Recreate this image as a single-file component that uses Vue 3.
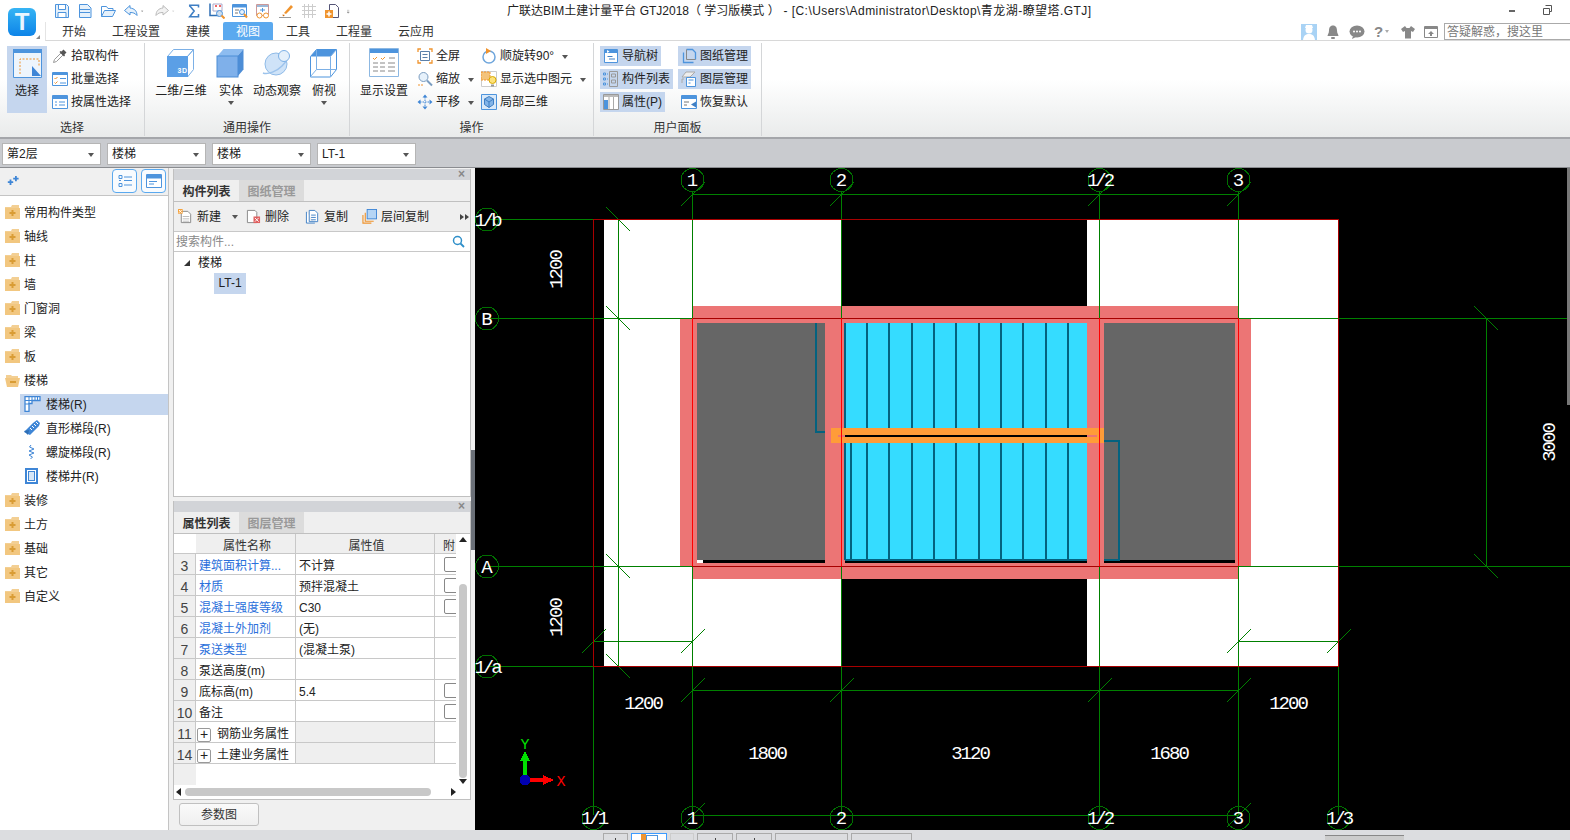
<template>
  <div class="app">

    <!-- Title bar + ribbon tabs -->
    <header class="topbar">
      <div class="logo-cell">
        <div class="logo">T</div>
        <i class="logo-corner"></i>
      </div>
      <div class="top-main">
        <div class="title-row">
          <div class="quick">
            <svg v-for="q in quickIcons" :key="q.name" class="ic" :class="q.cls" :width="q.w || 16" height="16" viewBox="0 0 16 16" v-html="icons[q.name]"></svg>
          </div>
          <div class="title">广联达BIM土建计量平台 GTJ2018（ 学习版模式 ）<span class="title-tail"> - [C:\Users\Administrator\Desktop\青龙湖-瞭望塔.GTJ]</span></div>
          <div class="win-ctl">
            <svg width="12" height="12" viewBox="0 0 12 12"><rect x="3" y="6" width="6" height="2" fill="#666" /></svg>
            <svg width="12" height="12" viewBox="0 0 12 12"><path d="M3.5 1.5h6v6h-2M1.5 4.5h6v6h-6z" fill="none" stroke="#555" /></svg>
          </div>
        </div>
        <div class="tab-row">
          <span v-for="t in tabs" :key="t" class="tab" :class="{ 'tab--on': t === '视图' }">{{ t }}</span>
          <div class="help">
            <svg width="16" height="16" viewBox="0 0 16 16" v-html="icons.avatar"></svg>
            <svg width="14" height="16" viewBox="0 0 14 16" v-html="icons.bell"></svg>
            <svg width="16" height="16" viewBox="0 0 16 16" v-html="icons.chat"></svg>
            <span class="help-q">?<i class="caret caret--mini"></i></span>
            <svg width="14" height="16" viewBox="0 0 14 16" v-html="icons.shirt"></svg>
            <svg width="14" height="16" viewBox="0 0 14 16" v-html="icons.upload"></svg>
            <div class="help-search">答疑解惑，搜这里</div>
          </div>
        </div>
      </div>
    </header>

    <!-- Ribbon -->
    <section class="ribbon">
      <div class="rgroup" style="width: 145px">
        <div class="rbody rbody--select">
          <div class="lbtn lbtn--on">
            <svg width="30" height="30" viewBox="0 0 30 30" v-html="icons.select"></svg>
            <span>选择</span>
          </div>
          <div class="scol">
            <div v-for="b in selectBtns" :key="b.text" class="sbtn">
              <svg width="16" height="16" viewBox="0 0 16 16" v-html="icons[b.icon]"></svg>{{ b.text }}
            </div>
          </div>
        </div>
        <div class="rlabel">选择</div>
      </div>

      <div class="rgroup" style="width: 205px">
        <div class="rbody rbody--common">
          <div v-for="b in commonBtns" :key="b.text" class="lbtn" :style="{ width: b.w + 'px' }">
            <svg width="30" height="30" viewBox="0 0 30 30" v-html="icons[b.icon]"></svg>
            <span>{{ b.text }}</span>
            <i v-if="b.more" class="caret"></i>
          </div>
        </div>
        <div class="rlabel">通用操作</div>
      </div>

      <div class="rgroup" style="width: 244px">
        <div class="rbody rbody--ops">
          <div class="lbtn" style="width: 52px">
            <svg width="30" height="30" viewBox="0 0 30 30" v-html="icons.display"></svg>
            <span>显示设置</span>
          </div>
          <div class="scol scol--a">
            <div v-for="b in opsA" :key="b.text" class="sbtn">
              <svg width="16" height="16" viewBox="0 0 16 16" v-html="icons[b.icon]"></svg>{{ b.text }}<i v-if="b.more" class="caret caret--side"></i>
            </div>
          </div>
          <div class="scol">
            <div v-for="b in opsB" :key="b.text" class="sbtn">
              <svg width="16" height="16" viewBox="0 0 16 16" v-html="icons[b.icon]"></svg>{{ b.text }}<i v-if="b.more" class="caret caret--side"></i>
            </div>
          </div>
        </div>
        <div class="rlabel">操作</div>
      </div>

      <div class="rgroup" style="width: 168px">
        <div class="rbody rbody--panel">
          <div class="scol scol--p">
            <div v-for="b in panelA" :key="b.text" class="sbtn sbtn--on">
              <svg width="16" height="16" viewBox="0 0 16 16" v-html="icons[b.icon]"></svg>{{ b.text }}
            </div>
          </div>
          <div class="scol">
            <div v-for="b in panelB" :key="b.text" class="sbtn" :class="{ 'sbtn--on': b.on }">
              <svg width="16" height="16" viewBox="0 0 16 16" v-html="icons[b.icon]"></svg>{{ b.text }}
            </div>
          </div>
        </div>
        <div class="rlabel">用户面板</div>
      </div>
    </section>

    <!-- Floor / component pickers -->
    <div class="pickers">
      <div v-for="(p, i) in pickers" :key="i" class="picker">{{ p }}<i class="caret"></i></div>
    </div>

    <div class="workspace">
      <!-- Navigation tree -->
      <aside class="nav">
        <div class="nav-head">
          <svg width="14" height="12" viewBox="0 0 14 12"><path d="M4 5v2H2v2h2v2h2V9h2V7H6V5zM10 1v2H8v2h2v2h2V5h2V3h-2V1z" fill="#3f86d6" transform="scale(.9)" /></svg>
          <div class="nav-toggle">
            <svg width="14" height="14" viewBox="0 0 14 14"><path d="M1 1.5h3v3H1zM1 9.5h3v3H1zM6 3h8M6 6.5h8M6 11h8M1 6.5h2" fill="none" stroke="#4d94dd" /></svg>
          </div>
          <div class="nav-toggle">
            <svg width="16" height="14" viewBox="0 0 16 14"><path d="M.5.5h15v13H.5z" fill="#fff" stroke="#4d94dd" /><path d="M1 1h14v3.500H1z" fill="#4d94dd" /><path d="M3 7.500h8M3 10h5" stroke="#4d94dd" /></svg>
          </div>
        </div>
        <div class="nav-tree">
          <div v-for="n in navItems" :key="n.text" class="nav-row" :class="{ 'nav-row--child': n.child }">
            <div class="nav-item" :class="{ 'nav-item--on': n.on }">
              <svg v-if="n.child" width="17" height="16" viewBox="0 0 17 16" v-html="icons[n.icon]"></svg>
              <svg v-else width="15" height="14" viewBox="0 0 15 14" v-html="n.open ? icons.folderOpen : icons.folder"></svg>
              <span>{{ n.text }}</span>
            </div>
          </div>
        </div>
      </aside>

      <!-- Component list + property panels -->
      <div class="side">
        <div class="panel panel--list">
          <div class="panel-strip"><span>×</span></div>
          <div class="panel-tabs">
            <span class="ptab ptab--on">构件列表</span>
            <span class="ptab">图纸管理</span>
          </div>
          <div class="list-tools">
            <div v-for="b in listTools" :key="b.text" class="ltool" :style="{ width: b.w + 'px' }">
              <svg width="15" height="15" viewBox="0 0 16 16" v-html="icons[b.icon]"></svg>
              <span>{{ b.text }}</span>
              <i v-if="b.more" class="caret caret--tool"></i>
            </div>
            <svg class="ltool-more" width="9" height="8" viewBox="0 0 9 8"><path d="M0 1l4 3-4 3zM5 1l4 3-4 3z" fill="#444" /></svg>
          </div>
          <div class="list-search">
            <span>搜索构件...</span>
            <svg width="13" height="13" viewBox="0 0 13 13"><circle cx="5.500" cy="5.500" r="4" fill="none" stroke="#2f8fc9" stroke-width="1.500" /><path d="M8.500 8.500l3.500 3.500" stroke="#2f8fc9" stroke-width="1.800" /></svg>
          </div>
          <div class="list-tree">
            <div class="lt-root"><i class="lt-arrow"></i>楼梯</div>
            <div class="lt-leaf">LT-1</div>
          </div>
        </div>

        <div class="panel panel--props">
          <div class="panel-strip"><span>×</span></div>
          <div class="panel-tabs">
            <span class="ptab ptab--on">属性列表</span>
            <span class="ptab">图层管理</span>
          </div>
          <div class="props-wrap">
            <div class="props">
              <div class="prow prow--head">
                <div class="pc pc-no"></div>
                <div class="pc pc-name">属性名称</div>
                <div class="pc pc-val">属性值</div>
                <div class="pc pc-att">附</div>
              </div>
              <div v-for="r in propRows" :key="r.no" class="prow">
                <div class="pc pc-no">{{ r.no }}</div>
                <div class="pc pc-name" :class="{ 'pc-name--link': r.link }">
                  <span v-if="r.group" class="plus">+</span>{{ r.name }}
                </div>
                <div class="pc pc-val" :class="{ 'pc-val--group': r.group }">{{ r.val }}</div>
                <div class="pc pc-att"><i v-if="r.check" class="check"></i></div>
              </div>
              <div class="prow-fill"></div>
            </div>
            <div class="vscroll">
              <i class="tri tri--up"></i>
              <div class="vthumb"></div>
              <i class="tri tri--down"></i>
            </div>
          </div>
          <div class="hscroll">
            <i class="tri tri--left"></i>
            <div class="hthumb"></div>
            <i class="tri tri--right"></i>
          </div>
        </div>

        <div class="props-foot"><button class="btn-param">参数图</button></div>
      </div>

      <div class="splitter"><i></i></div>

      <!-- Drawing canvas: page coordinates, viewBox starts at the canvas corner -->
      <div class="canvas">
        <svg width="1095" height="662" viewBox="475 168 1095 662" shape-rendering="crispEdges">
          <rect x="604" y="220" width="238" height="446" fill="#fff" />
          <rect x="1087" y="220" width="251" height="446" fill="#fff" />
          <rect x="692" y="306" width="546" height="273" fill="#ec7575" />
          <rect x="680" y="318" width="571" height="248" fill="#ec7575" />
          <rect x="697" y="323" width="128" height="237" fill="#666" />
          <rect x="1104" y="323" width="131" height="237" fill="#666" />
          <rect x="845" y="323" width="242" height="237" fill="#35dcff" />
          <rect x="697" y="560" width="6" height="3" fill="#fff" />
          <rect x="703" y="560" width="122" height="3" fill="#000" />
          <rect x="1104" y="560" width="131" height="3" fill="#000" />
          <rect x="845" y="561" width="242" height="2" fill="#000" />

          <!-- stair treads -->
          <rect v-for="x in treads" :key="'t' + x" :x="x" y="323" width="2" height="237" fill="#04627f" />
          <rect x="850" y="443" width="2" height="117" fill="#04627f" />
          <rect x="845" y="559" width="242" height="2" fill="#04627f" />
          <path d="M815.500 323V432H825M1104 440.500H1118.500V560H1104" fill="none" stroke="#04627f" stroke-width="2" />

          <!-- landing -->
          <rect x="831" y="428" width="273" height="15" fill="#ff9c38" />
          <rect x="838" y="435" width="259" height="2" fill="#ec7575" />
          <rect x="845" y="435" width="242" height="2" fill="#000" />

          <!-- axes -->
          <line v-for="(l, i) in greenLines" :key="'g' + i" :x1="l[0]" :y1="l[1]" :x2="l[2]" :y2="l[3]" stroke="#008000" />
          <line v-for="(l, i) in ticks" :key="'k' + i" :x1="l[0]" :y1="l[1]" :x2="l[2]" :y2="l[3]" stroke="#008000" />
          <line v-for="(l, i) in darkRedLines" :key="'d' + i" :x1="l[0]" :y1="l[1]" :x2="l[2]" :y2="l[3]" stroke="#a80000" />
          <line v-for="x in redAxes" :key="'r' + x" :x1="x" y1="318" :x2="x" y2="566" stroke="#ff0000" />

          <g v-for="b in bubbles" :key="b.t + b.x + b.y">
            <circle :cx="b.x" :cy="b.y" r="11.500" fill="none" stroke="#006f00" />
            <text class="cad-text" :class="{ 'cad-text--frac': b.t.length > 1 }" :x="b.x" :y="b.y + 6" text-anchor="middle">{{ b.t }}</text>
          </g>

          <text v-for="d in dims" :key="d.t + d.x + d.y" class="cad-text cad-text--dim" :transform="d.r ? `rotate(-90 ${d.x} ${d.y})` : null" :x="d.x" :y="d.y + 6" text-anchor="middle">{{ d.t }}</text>

          <!-- UCS marker -->
          <rect x="523" y="758" width="4" height="22" fill="#00e000" />
          <path d="M525 751l5 10h-10z" fill="#00e000" />
          <rect x="525" y="778" width="22" height="4" fill="#ff0000" />
          <path d="M554 780l-11 5v-10z" fill="#ff0000" />
          <circle cx="525" cy="780" r="5.500" fill="#0000b0" />
          <text class="cad-axis" x="525" y="749" fill="#00e000" text-anchor="middle">Y</text>
          <text class="cad-axis" x="561" y="786" fill="#ff0000" text-anchor="middle">X</text>
        </svg>
        <div class="canvas-bar"></div>
      </div>
    </div>

    <!-- Bottom strip -->
    <footer class="bottom">
      <div v-for="(b, i) in bottomTabs" :key="i" class="btab" :class="b.cls" :style="{ width: b.w + 'px' }">
        <i v-if="b.mark" class="btab-mark"></i>
        <svg v-if="b.cls === 'btab--on'" width="22" height="9" viewBox="0 0 22 9"><rect x="3" y="0" width="5" height="9" fill="#f0942e" /><rect x="8.500" y="1.500" width="11" height="9" fill="#fff" stroke="#4d94dd" /></svg>
      </div>
      <div class="bstrip"></div>
    </footer>
  </div>
</template>

<script setup>
const B = '#4d94dd'
const O = '#f0942e'

const icons = {
  save: `<path d="M1.500 1.500h11l2 2v11h-13z" fill="#e6f1fb" stroke="${B}"/><path d="M4.500 2v4.500h7V2M4 14v-4.500h8V14" fill="#fff" stroke="${B}"/>`,
  newDoc: `<path d="M2.500 1.500h8l3.500 3.500v9.500H2.500z" fill="#e6f1fb" stroke="${B}"/><path d="M3 6.500h10M3 9.500h10" stroke="${B}"/>`,
  open: `<path d="M1.500 13.500v-10h5l1.500 2h5v2" fill="none" stroke="${B}"/><path d="M1.500 13.500l3-6h11l-3 6z" fill="#e6f1fb" stroke="${B}"/>`,
  undo: `<path d="M7 2.500L1.500 7.500 7 12V9.500c3 0 5 .5 7 3 0-4.500-2.500-7-7-7.500z" fill="#e6f1fb" stroke="${B}"/>`,
  redo: `<path d="M9 2.500l5.500 5L9 12V9.500c-3 0-5 .5-7 3 0-4.500 2.500-7 7-7.500z" fill="#f2f2f2" stroke="#bbb"/>`,
  drop: `<path d="M0 7h6L3 10z" fill="#555"/>`,
  dropGray: `<path d="M0 7h6L3 10z" fill="#bbb"/>`,
  sigma: `<path d="M2 3V1.500h10V4M12 11.500v3H2l5-6.500-5-6" fill="none" stroke="#3f7fc4" stroke-width="1.800"/>`,
  report: `<path d="M1 .5v12h9" fill="none" stroke="#2f6fb5" stroke-width="1.500"/><path d="M4 1h9v7H4z" fill="#fff" stroke="#aac"/><path d="M6 2h2v2H6zM10 2h2v2h-2z" fill="#e66"/><circle cx="10.500" cy="10.500" r="3" fill="#cde" stroke="${B}"/><path d="M12.500 12.500l3 3" stroke="${O}" stroke-width="2"/>`,
  query: `<path d="M.5 1.500h14v12H.5z" fill="#fff" stroke="${B}"/><path d="M1 2h13v2.500H1z" fill="${B}"/><path d="M3 7h4M3 10h3" stroke="#777"/><circle cx="10" cy="9" r="2.500" fill="#e6f1fb" stroke="${B}"/><path d="M12 11l3 3.500" stroke="${O}" stroke-width="2"/>`,
  clock: `<path d="M1.500 1.500h12v11h-12z" fill="#fff" stroke="#c99"/><path d="M2 2h11v2H2z" fill="#9cb9d8"/><path d="M5 7h5M7.500 5v4" stroke="${B}"/><circle cx="4.500" cy="12.500" r="2.500" fill="#fff" stroke="${O}"/><circle cx="11" cy="12.500" r="2.500" fill="#fff" stroke="${O}"/>`,
  brush: `<path d="M6 10l7-8 2 2-7 7z" fill="${O}"/><path d="M4.500 11.500L7 12 5 13.500z" fill="#c60"/><path d="M1 14.500h12" stroke="#999"/>`,
  gridGray: `<path d="M1 3.500h14M1 7.500h14M1 11.500h14M3.500 1v14M7.500 1v14M11.500 1v14" stroke="#ccc"/>`,
  addDoc: `<path d="M5.500 1.500h6l3 3v10h-9z" fill="#fff" stroke="#557"/><rect x="1" y="7" width="8" height="8" fill="${O}"/><path d="M5 8.500v5M2.500 11h5" stroke="#fff" stroke-width="1.500"/>`,
  menu: `<path d="M0 6h6M0 8.500h6M0 11h6L3 14z" stroke="#777" fill="#777" stroke-width=".8"/>`,
  avatar: `<rect width="16" height="16" fill="#a9d3f5"/><circle cx="8" cy="6" r="3.500" fill="#fff"/><path d="M2 16c.5-4.500 3-6 6-6s5.500 1.500 6 6z" fill="#fff"/><path d="M4 4h8l-1-3H5z" fill="#fff"/>`,
  bell: `<path d="M7 1.500c-3 0-4 2.500-4 5 0 3-1.500 4-1.500 5.500h11c0-1.500-1.500-2.500-1.500-5.500 0-2.500-1-5-4-5z" fill="#888"/><rect x="5" y="13" width="4" height="2" rx="1" fill="#888"/>`,
  chat: `<ellipse cx="8" cy="7.500" rx="7.500" ry="6" fill="#888"/><path d="M4 12l-1 3 4-2z" fill="#888"/><circle cx="5" cy="7.500" r="1" fill="#fff"/><circle cx="8" cy="7.500" r="1" fill="#fff"/><circle cx="11" cy="7.500" r="1" fill="#fff"/>`,
  shirt: `<path d="M4 2L0 5l2 3 2-1v7.500h6V7l2 1 2-3-4-3-1.500 2h-3z" fill="#888"/>`,
  upload: `<path d="M.5 2.500h13v11H.5z" fill="#fff" stroke="#888"/><path d="M1 3h12v2H1z" fill="#888"/><path d="M7 7l3 3H8v2H6v-2H4z" fill="#888"/>`,

  select: `<path d="M1.500 1.500h28v28h-28z" fill="#eef5fc" stroke="#4d94dd"/><path d="M1 1h29v4H1z" fill="#4d94dd"/><path d="M8 26V11h19v7" fill="none" stroke="${O}" stroke-dasharray="2 1.500"/><path d="M20 18l9 10h-9z" fill="#3f86d6"/>`,
  cube2d: `<path d="M1.500 8.500l6-7h20l-6 7zM21.500 8.500l6-7v20l-6 7.500z" fill="#fff" stroke="#7cb0e6"/><rect x="1" y="8" width="21" height="21" fill="#5b9fe6"/><text x="11.500" y="25" font-size="7" font-family='Liberation Sans' font-weight="700" fill="#fff" letter-spacing=".5">3D</text>`,
  solid: `<path d="M1.500 8l6-7h20l-6 7z" fill="#8dbcf0"/><path d="M21.500 8l6-7v20.500l-6 7z" fill="#4d8dd6"/><rect x="1" y="8" width="21" height="21" fill="#7fb0ea" stroke="#4d8dd6"/>`,
  orbit: `<ellipse cx="14" cy="16" rx="11" ry="11" fill="#cfe3f8" stroke="#8fbbe8"/><path d="M1 25c5 2 14-2 19-7 4-4 7-8 5-10" fill="none" stroke="#9cc3ec" stroke-width="1.500"/><circle cx="22" cy="8" r="5.500" fill="#e4f0fb" stroke="#7cb0e6"/>`,
  topview: `<path d="M1.500 8.500l6-7h20v20l-6 7.500h-20z" fill="#fff" stroke="#4d94dd"/><path d="M1.500 8.500l6-7h20l-6 7z" fill="#4d94dd"/><path d="M21.500 8.500v20M21.500 8.500l6-7M7.500 1.500v20h20M7.500 21.500l-6 7" fill="none" stroke="#7cb0e6"/>`,
  display: `<path d="M.5.500h29v28H.5z" fill="#fff" stroke="#8db8e2"/><path d="M1 1h28v4H1z" fill="#4d94dd"/><path d="M4 10l1.500 1.500L8 9M12 10l1.500 1.500L16 9" fill="none" stroke="${O}"/><path d="M20 10h6M4 15h5M11 15h5M19 15h7M4 19h5M11 19h5M19 19h7M4 23h5M11 23h5M19 23h7" stroke="#888"/>`,

  pick: `<path d="M1.500 14.500l1-3L9 5l2 2-6.500 6.500z" fill="#fff" stroke="#999"/><path d="M9.500 3.500l2-2 3 3-2 2 .5 1L12 8.500 7.500 4l1-1z" fill="#555"/>`,
  batch: `<path d="M.5 1.500h15v13H.5z" fill="#fff" stroke="${B}"/><path d="M1 2h14v2H1z" fill="${B}"/><path d="M2.500 7l1 1 2-2M2.500 11.500l1 1 2-2" fill="none" stroke="${O}"/><path d="M8 7.500h6M8 12h6" stroke="${B}"/>`,
  attr: `<path d="M.5 1.500h15v13H.5z" fill="#fff" stroke="${B}"/><path d="M1 2h14v3H1z" fill="${B}"/><path d="M3 8h2M3 11h2M7 8h6M7 11h6" stroke="${B}"/>`,
  full: `<path d="M1 4V1h3M12 1h3v3M15 12v3h-3M4 15H1v-3" fill="none" stroke="${O}" stroke-width="1.300"/><path d="M3.500 3.500h9v9h-9z" fill="#fff" stroke="#5a7fa8"/><path d="M5.500 6.500h5M5.500 9.500h5" stroke="#5a7fa8"/>`,
  zoom: `<circle cx="6.500" cy="6" r="4.500" fill="#e6f1fb" stroke="#7a9cc0"/><path d="M10 9.500l5 5" stroke="#7a9cc0" stroke-width="2"/><path d="M1 14h6" stroke="${O}" stroke-dasharray="2 1"/>`,
  pan: `<path d="M8 .5l2.500 3h-5zM8 15.500l-2.500-3h5zM.5 8l3-2.500v5zM15.500 8l-3 2.500v-5z" fill="#3f86d6"/><path d="M8 3v10M3 8h10" stroke="#3f86d6" stroke-dasharray="1.500 1"/>`,
  rotate: `<circle cx="8" cy="9" r="6" fill="#fff" stroke="#6fa6dc" stroke-width="1.500"/><path d="M5 0l5 3-5 3z" fill="${O}"/>`,
  lamp: `<path d="M.5.500h15v15H.5z" fill="#fff" stroke="#ccc"/><path d="M0 1h9v8H0z" fill="#f3c37c" stroke="${O}" stroke-dasharray="2 1"/><circle cx="11.500" cy="9" r="3.500" fill="#fde27a" stroke="#d9a900"/><path d="M10 13.500h3v2h-3z" fill="#999"/>`,
  local3d: `<path d="M.5.500h15v15H.5z" fill="#d9e9f9" stroke="${B}"/><path d="M8 2.500l4.500 2.500v5.500L8 13.500 3.500 10.500V5z" fill="#82b4e8" stroke="#3f7fc4"/><path d="M3.500 5L8 8l4.500-3M8 8v5.500" fill="none" stroke="#3f7fc4"/>`,
  navTree: `<path d="M1.500 1.500h13v13h-13z" fill="#fff" stroke="${B}"/><path d="M2 2h12v3H2z" fill="${B}"/><path d="M4 2l2.500 1.500L4 5z" fill="#fff"/><path d="M4.500 8.500h5M6 11h6" stroke="#3f7fc4"/>`,
  compList: `<path d="M.5 2h2v2h-2zM.5 7h2v2h-2zM.5 12h2v2h-2zM4 3h1M4 8h1M4 13h1" fill="none" stroke="${B}"/><path d="M6.500.500h8v15h-8z" fill="none" stroke="#999"/><path d="M8.500 3h4v3h-4zM8.500 9h4v3h-4z" fill="none" stroke="#999"/>`,
  propsP: `<path d="M.5.500h15v15H.5z" fill="#fff" stroke="#999"/><path d="M1 1h14v2H1z" fill="#bbb"/><path d="M1 6h4v9H1z" fill="${B}"/><path d="M6 3v12M10.500 3v12" stroke="#aaa"/>`,
  drawings: `<path d="M2.500 4.500v10h10M5.500 1.500h6l3 3v7" fill="none" stroke="${B}" stroke-width="1.300"/><path d="M5.500 1.500v10h9" fill="none" stroke="#888"/>`,
  layers: `<path d="M5 1l9 0-5 5H1z" fill="#eee" stroke="#aaa"/><path d="M3 8l-2 0 0 4" fill="none" stroke="#aaa"/><path d="M5.500 6.500h9v9h-9z" fill="#fff" stroke="${B}"/><path d="M7.500 9h5M7.500 12h2" stroke="${B}"/>`,
  restore: `<path d="M.5 1.500h15v13H.5z" fill="#fff" stroke="${B}"/><path d="M1 2h14v3H1z" fill="${B}"/><path d="M3 8h5M3 11h3" stroke="#777"/><path d="M10 10.500l5-3v6z" fill="#3f7fc4"/>`,

  folder: `<path d="M0 2h6l1-2h7v3h1v11H0z" fill="#f3cf93"/><path d="M0 3h15v11H0z" fill="#f2c780"/><path d="M7 6v2H5v2h2v2h2v-2h2V8H9V6z" fill="#d99c35" transform="translate(-.5 -1)"/>`,
  folderOpen: `<path d="M1 2h5l1 1h6v3H1z" fill="#f3cf93"/><path d="M0 5h15l-2 9H2z" fill="#f2c780"/><rect x="5" y="8" width="6" height="2" fill="#d99c35"/>`,
  stair: `<path d="M1 .5h15v4H8v3H5v8H1z" fill="#fff" stroke="#3f86d6" stroke-width="1.300"/><path d="M5 1v7M8 1v3M11 1v3M13.500 1v3M1 4.500h7M1 8h4" stroke="#3f86d6"/>`,
  flight: `<path d="M0 12l9-9 4-3 3 3-1 3-9 9z" fill="#3f86d6"/><path d="M0 11l5-1-1 5z" fill="#2f6fb5"/><path d="M8 6l2 2M10 4l2 2M12 2l2 2M6 8l2 2" stroke="#fff"/>`,
  spiral: `<path d="M7 1l-1.500 2L10 5 5 7l5 2-5 2 3.500 2-2 2" fill="none" stroke="#3f86d6"/>`,
  well: `<rect x="2" y="1" width="11" height="14" fill="#fff" stroke="#3f86d6" stroke-width="2"/><rect x="4.500" y="3.500" width="6" height="9" fill="#d6e6f7" stroke="#3f86d6"/>`,

  toolNew: `<path d="M3.500 2.500h7l3 3v9h-10z" fill="#fff" stroke="#888"/><path d="M5 8h7M5 10.500h7M5 13h7" stroke="#bbb"/><path d="M0 0h5v5H0z" fill="#f5a23c"/><path d="M1 1l3 3M4 1L1 4" stroke="#fff"/>`,
  toolDel: `<path d="M1.500 1.500h8l2 2v11h-10z" fill="#fff" stroke="#888"/><rect x="8" y="8" width="7" height="7" fill="#e06060"/><path d="M9.500 9.500l4 4M13.500 9.500l-4 4" stroke="#fff"/>`,
  toolCopy: `<path d="M1.500 3v12h9M4.500 1.500h6l3 3v9h-9z" fill="#fff" stroke="#3f7fc4"/><path d="M6.500 6.500h5M6.500 9h5M6.500 11.500h5" stroke="#3f7fc4"/>`,
  toolFloor: `<rect x="5.500" y=".500" width="10" height="10" fill="#b5d5f5" stroke="#3f86d6"/><path d="M3.500 4v9h9M1 6.500v8.500h9" fill="none" stroke="${O}" stroke-width="1.200"/>`
}

const quickIcons = [
  { name: 'save' }, { name: 'newDoc' }, { name: 'open' }, { name: 'undo' },
  { name: 'drop', w: 6, cls: 'ic--drop' }, { name: 'redo' }, { name: 'dropGray', w: 6, cls: 'ic--drop' },
  { name: 'sigma', w: 14, cls: 'ic--sigma' }, { name: 'report' }, { name: 'query' }, { name: 'clock' },
  { name: 'brush' }, { name: 'gridGray' }, { name: 'addDoc' }, { name: 'menu', w: 6 }
]

const tabs = ['开始', '工程设置', '建模', '视图', '工具', '工程量', '云应用']

const selectBtns = [
  { text: '拾取构件', icon: 'pick' },
  { text: '批量选择', icon: 'batch' },
  { text: '按属性选择', icon: 'attr' }
]

const commonBtns = [
  { text: '二维/三维', icon: 'cube2d', w: 54 },
  { text: '实体', icon: 'solid', w: 46, more: true },
  { text: '动态观察', icon: 'orbit', w: 46 },
  { text: '俯视', icon: 'topview', w: 48, more: true }
]

const opsA = [
  { text: '全屏', icon: 'full' },
  { text: '缩放', icon: 'zoom', more: true },
  { text: '平移', icon: 'pan', more: true }
]

const opsB = [
  { text: '顺旋转90°', icon: 'rotate', more: true },
  { text: '显示选中图元', icon: 'lamp', more: true },
  { text: '局部三维', icon: 'local3d' }
]

const panelA = [
  { text: '导航树', icon: 'navTree' },
  { text: '构件列表', icon: 'compList' },
  { text: '属性(P)', icon: 'propsP' }
]

const panelB = [
  { text: '图纸管理', icon: 'drawings', on: true },
  { text: '图层管理', icon: 'layers', on: true },
  { text: '恢复默认', icon: 'restore' }
]

const pickers = ['第2层', '楼梯', '楼梯', 'LT-1']

const navItems = [
  { text: '常用构件类型' }, { text: '轴线' }, { text: '柱' }, { text: '墙' },
  { text: '门窗洞' }, { text: '梁' }, { text: '板' }, { text: '楼梯', open: true },
  { text: '楼梯(R)', child: true, icon: 'stair', on: true },
  { text: '直形梯段(R)', child: true, icon: 'flight' },
  { text: '螺旋梯段(R)', child: true, icon: 'spiral' },
  { text: '楼梯井(R)', child: true, icon: 'well' },
  { text: '装修' }, { text: '土方' }, { text: '基础' }, { text: '其它' }, { text: '自定义' }
]

const listTools = [
  { text: '新建', icon: 'toolNew', w: 68, more: true },
  { text: '删除', icon: 'toolDel', w: 59 },
  { text: '复制', icon: 'toolCopy', w: 57 },
  { text: '层间复制', icon: 'toolFloor', w: 90 }
]

const propRows = [
  { no: 3, name: '建筑面积计算...', val: '不计算', link: true, check: true },
  { no: 4, name: '材质', val: '预拌混凝土', link: true, check: true },
  { no: 5, name: '混凝土强度等级', val: 'C30', link: true, check: true },
  { no: 6, name: '混凝土外加剂', val: '(无)', link: true },
  { no: 7, name: '泵送类型', val: '(混凝土泵)', link: true },
  { no: 8, name: '泵送高度(m)', val: '' },
  { no: 9, name: '底标高(m)', val: '5.4', check: true },
  { no: 10, name: '备注', val: '', check: true },
  { no: 11, name: '钢筋业务属性', val: '', group: true },
  { no: 14, name: '土建业务属性', val: '', group: true }
]

const treads = [844, 866, 888, 911, 933, 955, 978, 1000, 1022, 1045, 1067]
const redAxes = [692.5, 841.5, 1099.5, 1238.5]

// axis lines, in page coordinates
const greenLines = [
  [487, 219.5, 593, 219.5], [487, 318.5, 692, 318.5], [487, 566.5, 692, 566.5], [487, 666.5, 593, 666.5],
  [1238, 318.5, 1570, 318.5], [1238, 566.5, 1570, 566.5],
  [692.5, 192, 692.5, 318], [841.5, 192, 841.5, 318], [1099.5, 192, 1099.5, 318], [1238.5, 192, 1238.5, 318],
  [692.5, 566, 692.5, 815], [841.5, 566, 841.5, 815], [1099.5, 566, 1099.5, 815], [1238.5, 566, 1238.5, 815],
  [593.5, 666, 593.5, 815], [1338.5, 666, 1338.5, 815],
  [692, 194.5, 1238, 194.5], [692, 690.5, 1238, 690.5], [692, 815.5, 1238, 815.5],
  [593, 641.5, 692, 641.5], [1238, 641.5, 1338, 641.5],
  [618.5, 219, 618.5, 666], [1486.5, 318, 1486.5, 566]
]

const slashAt = [
  [692.5, 194.5], [841.5, 194.5], [1099.5, 194.5], [1238.5, 194.5],
  [593.5, 641.5], [692.5, 641.5], [1238.5, 641.5], [1338.5, 641.5],
  [692.5, 690.5], [841.5, 690.5], [1099.5, 690.5], [1238.5, 690.5],
  [692.5, 815.5], [1238.5, 815.5]
]
const backAt = [
  [618.5, 219.5], [618.5, 318.5], [618.5, 566.5], [618.5, 666.5],
  [1486.5, 318.5], [1486.5, 566.5]
]
const ticks = [
  ...slashAt.map(([x, y]) => [x - 12, y + 12, x + 12, y - 12]),
  ...backAt.map(([x, y]) => [x - 12, y - 12, x + 12, y + 12])
]

const darkRedLines = [
  [593, 219.5, 1338, 219.5], [593, 666.5, 1338, 666.5],
  [593.5, 219, 593.5, 666], [1338.5, 219, 1338.5, 667],
  [692, 318.5, 1238, 318.5], [692, 566.5, 1238, 566.5]
]

const bubbles = [
  { t: '1', x: 692.5, y: 180 }, { t: '2', x: 841.5, y: 180 }, { t: '1/2', x: 1099.5, y: 180 }, { t: '3', x: 1238.5, y: 180 },
  { t: '1/b', x: 487, y: 219.5 }, { t: 'B', x: 487, y: 318.5 }, { t: 'A', x: 487, y: 566.5 }, { t: '1/a', x: 487, y: 666.5 },
  { t: '1/1', x: 593.5, y: 818 }, { t: '1', x: 692.5, y: 818 }, { t: '2', x: 841.5, y: 818 },
  { t: '1/2', x: 1099.5, y: 818 }, { t: '3', x: 1238.5, y: 818 }, { t: '1/3', x: 1338.5, y: 818 }
]

const dims = [
  { t: '1200', x: 556, y: 270, r: true }, { t: '1200', x: 556, y: 618, r: true }, { t: '3000', x: 1549, y: 443, r: true },
  { t: '1200', x: 643, y: 703 }, { t: '1800', x: 767, y: 753 }, { t: '3120', x: 970, y: 753 },
  { t: '1680', x: 1169, y: 753 }, { t: '1200', x: 1288, y: 703 }
]

const bottomTabs = [
  { w: 25, mark: true }, { w: 36, cls: 'btab--on' }, { w: 24, cls: 'btab--off' }, { w: 36, mark: true },
  { w: 36, mark: true }, { w: 73 }, { w: 61 }
]
</script>

<style>
html, body { margin: 0; background: #f0f0f0; }
</style>

<style scoped>
.app {
  width: 1570px;
  height: 840px;
  overflow: hidden;
  display: flex;
  flex-direction: column;
  background: #f0f0f0;
  color: #222;
  font: 12px/16px "Liberation Sans", "Noto Sans CJK SC", sans-serif;
}

/* ── Title bar ─────────────────────────────────────── */
.topbar {
  display: flex;
  height: 41px;
  flex: none;
  background: #fff;
}
.logo-cell {
  width: 45px;
  flex: none;
  position: relative;
}
.logo {
  margin: 8px 0 0 8px;
  width: 28px;
  height: 28px;
  border-radius: 6px;
  background: linear-gradient(180deg, #36b4f4, #0d84e8);
  color: #eaf6ff;
  font: 700 24px/28px "Liberation Sans", sans-serif;
  text-align: center;
}
.logo-corner {
  position: absolute;
  right: 5px;
  bottom: 2px;
  border-left: 4px solid transparent;
  border-bottom: 4px solid #888;
}
.top-main {
  flex: 1;
  display: flex;
  flex-direction: column;
  min-width: 0;
}
.title-row {
  height: 22px;
  display: flex;
  align-items: flex-start;
}
.quick {
  width: 462px;
  flex: none;
  display: flex;
  gap: 7px;
  padding: 3px 0 0 9px;
  box-sizing: border-box;
}
.ic { flex: none; }
.ic--drop { margin-left: -5px; }
.ic--sigma { margin-left: 3px; }
.title {
  flex: 1;
  line-height: 22px;
  white-space: pre;
  color: #222;
}
.title-tail { letter-spacing: .45px; }
.win-ctl {
  display: flex;
  gap: 24px;
  padding: 4px 16px 0 0;
}
.tab-row {
  flex: 1;
  display: flex;
  border-bottom: 1px solid #d8d8d8;
  border-left: 1px solid #e4e4e4;
  padding-left: 3px;
}
.tab {
  padding: 0 13px;
  height: 18px;
  line-height: 20px;
  color: #333;
}
.tab--on {
  background: #5aa9ef;
  color: #fff;
  border-radius: 2px 2px 0 0;
}
.help {
  margin-left: auto;
  display: flex;
  align-items: center;
  gap: 9px;
  height: 18px;
}
.help > svg, .help-q { margin-top: 1px; }
.help-q {
  color: #888;
  font-size: 15px;
  font-weight: 700;
  width: 18px;
  display: flex;
  align-items: center;
  gap: 2px;
}
.help-search {
  width: 127px;
  height: 17px;
  margin: 0 -1px 0 -3px;
  box-sizing: border-box;
  border: 1px solid #aaa;
  padding-left: 2px;
  line-height: 16px;
  color: #777;
  background: #fff;
  white-space: nowrap;
  overflow: hidden;
}

/* ── Ribbon ────────────────────────────────────────── */
.ribbon {
  height: 98px;
  flex: none;
  display: flex;
  box-sizing: border-box;
  border-bottom: 2px solid #a4a6aa;
  background: linear-gradient(180deg, #fff 40%, #e9ebeb 100%);
}
.rgroup {
  height: 93px;
  margin-top: 2px;
  flex: none;
  box-sizing: border-box;
  border-right: 1px solid #d4d6d8;
  display: flex;
  flex-direction: column;
}
.rbody {
  height: 75px;
  padding-top: 3px;
  display: flex;
  box-sizing: border-box;
}
.rbody--select { padding-left: 7px; }
.rbody--common { padding-left: 9px; }
.rbody--ops { padding-left: 8px; }
.rbody--panel { padding-left: 6px; }
.rlabel {
  height: 18px;
  line-height: 20px;
  text-align: center;
  color: #333;
}
.lbtn {
  display: flex;
  flex-direction: column;
  align-items: center;
  padding-top: 2px;
  height: 67px;
  box-sizing: border-box;
  white-space: nowrap;
}
.lbtn span { margin-top: 5px; }
.lbtn--on {
  width: 40px;
  background: #c5d6ee;
}
.scol {
  display: flex;
  flex-direction: column;
  gap: 3px;
}
.rbody--select .scol { margin-left: 2px; }
.scol--a { width: 64px; margin-left: 4px; }
.scol--p { width: 78px; }
.sbtn {
  height: 20px;
  box-sizing: border-box;
  display: flex;
  align-items: center;
  gap: 3px;
  padding: 0 3px;
  white-space: nowrap;
  align-self: flex-start;
}
.sbtn--on { background: #c5d6ee; }

.caret {
  display: block;
  width: 0;
  height: 0;
  margin-top: 2px;
  border-left: 3.5px solid transparent;
  border-right: 3.5px solid transparent;
  border-top: 4px solid #555;
}
.caret--side { margin: 1px 0 0 5px; }
.caret--mini { border-top-color: #aaa; margin: 0; border-width: 3px 2.500px 0; }
.caret--tool { margin: 1px 0 0 7px; }

/* ── Pickers ───────────────────────────────────────── */
.pickers {
  height: 29px;
  flex: none;
  box-sizing: border-box;
  padding: 4px 0 0 2px;
  display: flex;
  gap: 6px;
  background: #c9cbcf;
  border-bottom: 1px solid #8a8c90;
}
.picker {
  width: 99px;
  height: 22px;
  box-sizing: border-box;
  background: #fff;
  border: 1px solid #b5b5b5;
  padding: 0 6px 0 4px;
  line-height: 20px;
  display: flex;
  align-items: center;
  justify-content: space-between;
}

/* ── Workspace ─────────────────────────────────────── */
.workspace {
  flex: 1;
  display: flex;
  min-height: 0;
}
.nav {
  width: 169px;
  flex: none;
  box-sizing: border-box;
  background: #fff;
  border-right: 1px solid #c4c4c4;
}
.nav-head {
  height: 28px;
  box-sizing: border-box;
  background: #f0f0f0;
  border-bottom: 1px solid #c4c4c4;
  display: flex;
  align-items: center;
  gap: 4px;
  padding: 0 2px 2px 6px;
}
.nav-head > svg { margin-right: auto; }
.nav-toggle {
  width: 25px;
  height: 24px;
  box-sizing: border-box;
  border: 1px solid #5aa9ef;
  border-radius: 4px;
  display: flex;
  align-items: center;
  justify-content: center;
  background: #f8fbfe;
}
.nav-tree { padding-top: 4px; }
.nav-row {
  height: 24px;
  display: flex;
  align-items: center;
  padding-left: 5px;
}
.nav-row--child { padding-left: 20px; }
.nav-item {
  flex: 1;
  height: 21px;
  display: flex;
  align-items: center;
  gap: 4px;
}
.nav-item span { padding-top: 2px; }
.nav-row--child .nav-item { padding-left: 4px; gap: 5px; }
.nav-item--on { background: #c5d6ee; }

.side {
  width: 302px;
  flex: none;
  box-sizing: border-box;
  padding: 1px 0 0 4px;
  display: flex;
  flex-direction: column;
  gap: 4px;
}
.panel {
  flex: none;
  box-sizing: border-box;
  border: 1px solid #c0c0c0;
  border-top: 0;
  width: 298px;
  display: flex;
  flex-direction: column;
  background: #efefef;
}
.panel--list { height: 328px; }
.panel--props { height: 299px; }
.panel-strip {
  height: 11px;
  flex: none;
  background: #d2d4d8;
  text-align: right;
  padding-right: 5px;
  font-size: 12px;
  line-height: 11px;
  font-weight: 700;
  color: #888;
}
.panel-tabs {
  height: 22px;
  flex: none;
  display: flex;
  box-sizing: border-box;
  border-bottom: 1px solid #c0c0c0;
}
.ptab {
  width: 65px;
  text-align: center;
  line-height: 25px;
  height: 21px;
  color: #999;
  font-weight: 700;
  background: #dcdcdc;
}
.ptab--on {
  background: #efefef;
  color: #333;
}
.list-tools {
  height: 30px;
  flex: none;
  display: flex;
  align-items: center;
  padding-left: 4px;
  box-sizing: border-box;
  border-bottom: 1px solid #c8c8c8;
}
.ltool {
  flex: none;
  display: flex;
  align-items: center;
  gap: 4px;
}
.ltool-more {
  margin-left: auto;
  margin-right: 1px;
}
.list-search {
  height: 19px;
  flex: none;
  background: #fff;
  border-bottom: 1px solid #c8c8c8;
  display: flex;
  align-items: center;
  justify-content: space-between;
  padding: 0 5px 0 2px;
  color: #888;
}
.list-tree {
  flex: 1;
  background: #fff;
  padding-top: 1px;
}
.lt-root {
  height: 20px;
  line-height: 20px;
  padding-left: 24px;
  position: relative;
}
.lt-arrow {
  position: absolute;
  left: 10px;
  top: 7px;
  border-left: 6px solid transparent;
  border-bottom: 6px solid #333;
}
.lt-leaf {
  margin-left: 40px;
  width: 32px;
  height: 21px;
  line-height: 21px;
  text-align: center;
  background: #c5d6ee;
}

/* ── Property grid ─────────────────────────────────── */
.props-wrap {
  flex: 1;
  display: flex;
  min-height: 0;
  background: #fff;
}
.props {
  width: 282px;
  flex: none;
  display: flex;
  flex-direction: column;
}
.prow {
  display: grid;
  grid-template-columns: 22px 100px 139px 21px;
  height: 21px;
  box-sizing: border-box;
  border-bottom: 1px solid #c8c8c8;
}
.prow--head {
  height: 20px;
  background: #efefef;
}
.pc {
  box-sizing: border-box;
  border-right: 1px solid #c8c8c8;
  padding-left: 3px;
  line-height: 24px;
  white-space: nowrap;
  overflow: hidden;
}
.pc:last-child { border-right: 0; }
.prow--head .pc-name, .prow--head .pc-val { text-align: center; }
.prow--head .pc-no { background: #fff; border-right: 0; border-bottom: 0; }
.prow--head .pc { color: #333; }
.prow--head .pc-att { padding-left: 8px; }
.pc-no {
  background: #efefef;
  font-size: 14px;
  color: #444;
  text-align: center;
  padding-left: 0;
}
.pc-name--link { color: #2a6fdb; }
.pc-val--group { background: #efefef; }
.plus {
  display: inline-block;
  width: 12px;
  height: 12px;
  margin: 0 6px 0 0;
  border: 1px solid #999;
  border-radius: 2px;
  text-align: center;
  line-height: 11px;
  font-size: 14px;
  vertical-align: -1px;
  color: #222;
}
.pc-name:has(.plus) { padding-left: 1px; }
.check {
  display: block;
  width: 14px;
  height: 13px;
  margin: 3px 0 0 9px;
  border: 1px solid #888;
  border-radius: 2px;
  background: #fff;
}
.pc-att { padding-left: 0; }
.prow-fill {
  flex: 1;
  width: 22px;
  background: #efefef;
}
.vscroll {
  flex: 1;
  display: flex;
  flex-direction: column;
  align-items: center;
  padding-top: 1px;
}
.vthumb {
  width: 8px;
  height: 194px;
  margin: 42px 0 1px;
  border-radius: 4px;
  background: #c8c8c8;
}
.tri { display: block; width: 0; height: 0; flex: none; }
.tri--up { border: 4px solid transparent; border-top: 0; border-bottom: 5px solid #222; margin-top: 2px; }
.tri--down { border: 4px solid transparent; border-bottom: 0; border-top: 5px solid #222; }
.tri--left { border: 4px solid transparent; border-left: 0; border-right: 5px solid #222; }
.tri--right { border: 4px solid transparent; border-right: 0; border-left: 5px solid #222; }
.hscroll {
  height: 14px;
  flex: none;
  background: #fff;
  display: flex;
  align-items: center;
  padding-left: 2px;
}
.hthumb {
  width: 246px;
  height: 8px;
  margin: 0 20px 0 4px;
  border-radius: 4px;
  background: #c8c8c8;
}
.props-foot { padding: 0 0 0 6px; margin-top: -1px; }
.btn-param {
  width: 80px;
  height: 23px;
  border: 1px solid #c0c0c0;
  border-radius: 3px;
  background: linear-gradient(180deg, #fafafa, #efefef);
  font: inherit;
  color: #333;
  padding: 0;
}

.splitter {
  width: 4px;
  flex: none;
}
.splitter i {
  display: block;
  margin-top: 282px;
  height: 100px;
  background: #6b7078;
}

/* ── Canvas ────────────────────────────────────────── */
.canvas {
  flex: 1;
  position: relative;
  background: #000;
  overflow: hidden;
}
.canvas svg { display: block; }
.canvas-bar {
  position: absolute;
  right: 0;
  top: 0;
  width: 3px;
  height: 237px;
  background: #777;
}
.cad-text {
  font: 19px "Liberation Mono", monospace;
  fill: #fff;
}
.cad-text--frac { letter-spacing: -3px; }
.cad-text--dim { letter-spacing: -2px; }
.cad-axis { font: 15px "Liberation Mono", monospace; }

/* ── Bottom strip ──────────────────────────────────── */
.bottom {
  height: 10px;
  flex: none;
  display: flex;
  gap: 3px;
  padding: 3px 0 0 603px;
  box-sizing: border-box;
  background: #dcdde0;
}
.btab {
  height: 12px;
  box-sizing: border-box;
  border: 1px solid #aaa;
  background: #dcdde0;
  display: flex;
  justify-content: center;
}
.btab-mark {
  width: 1px;
  height: 3px;
  margin-top: 4px;
  background: #444;
}
.btab--on { border-color: #3c9bff; background: #fff; }
.btab--off { border-color: #ccc; }
.bstrip {
  width: 79px;
  margin: 2px 0 0 410px;
  height: 8px;
  border-top: 1px solid #888;
  background: #ccc;
}
</style>
